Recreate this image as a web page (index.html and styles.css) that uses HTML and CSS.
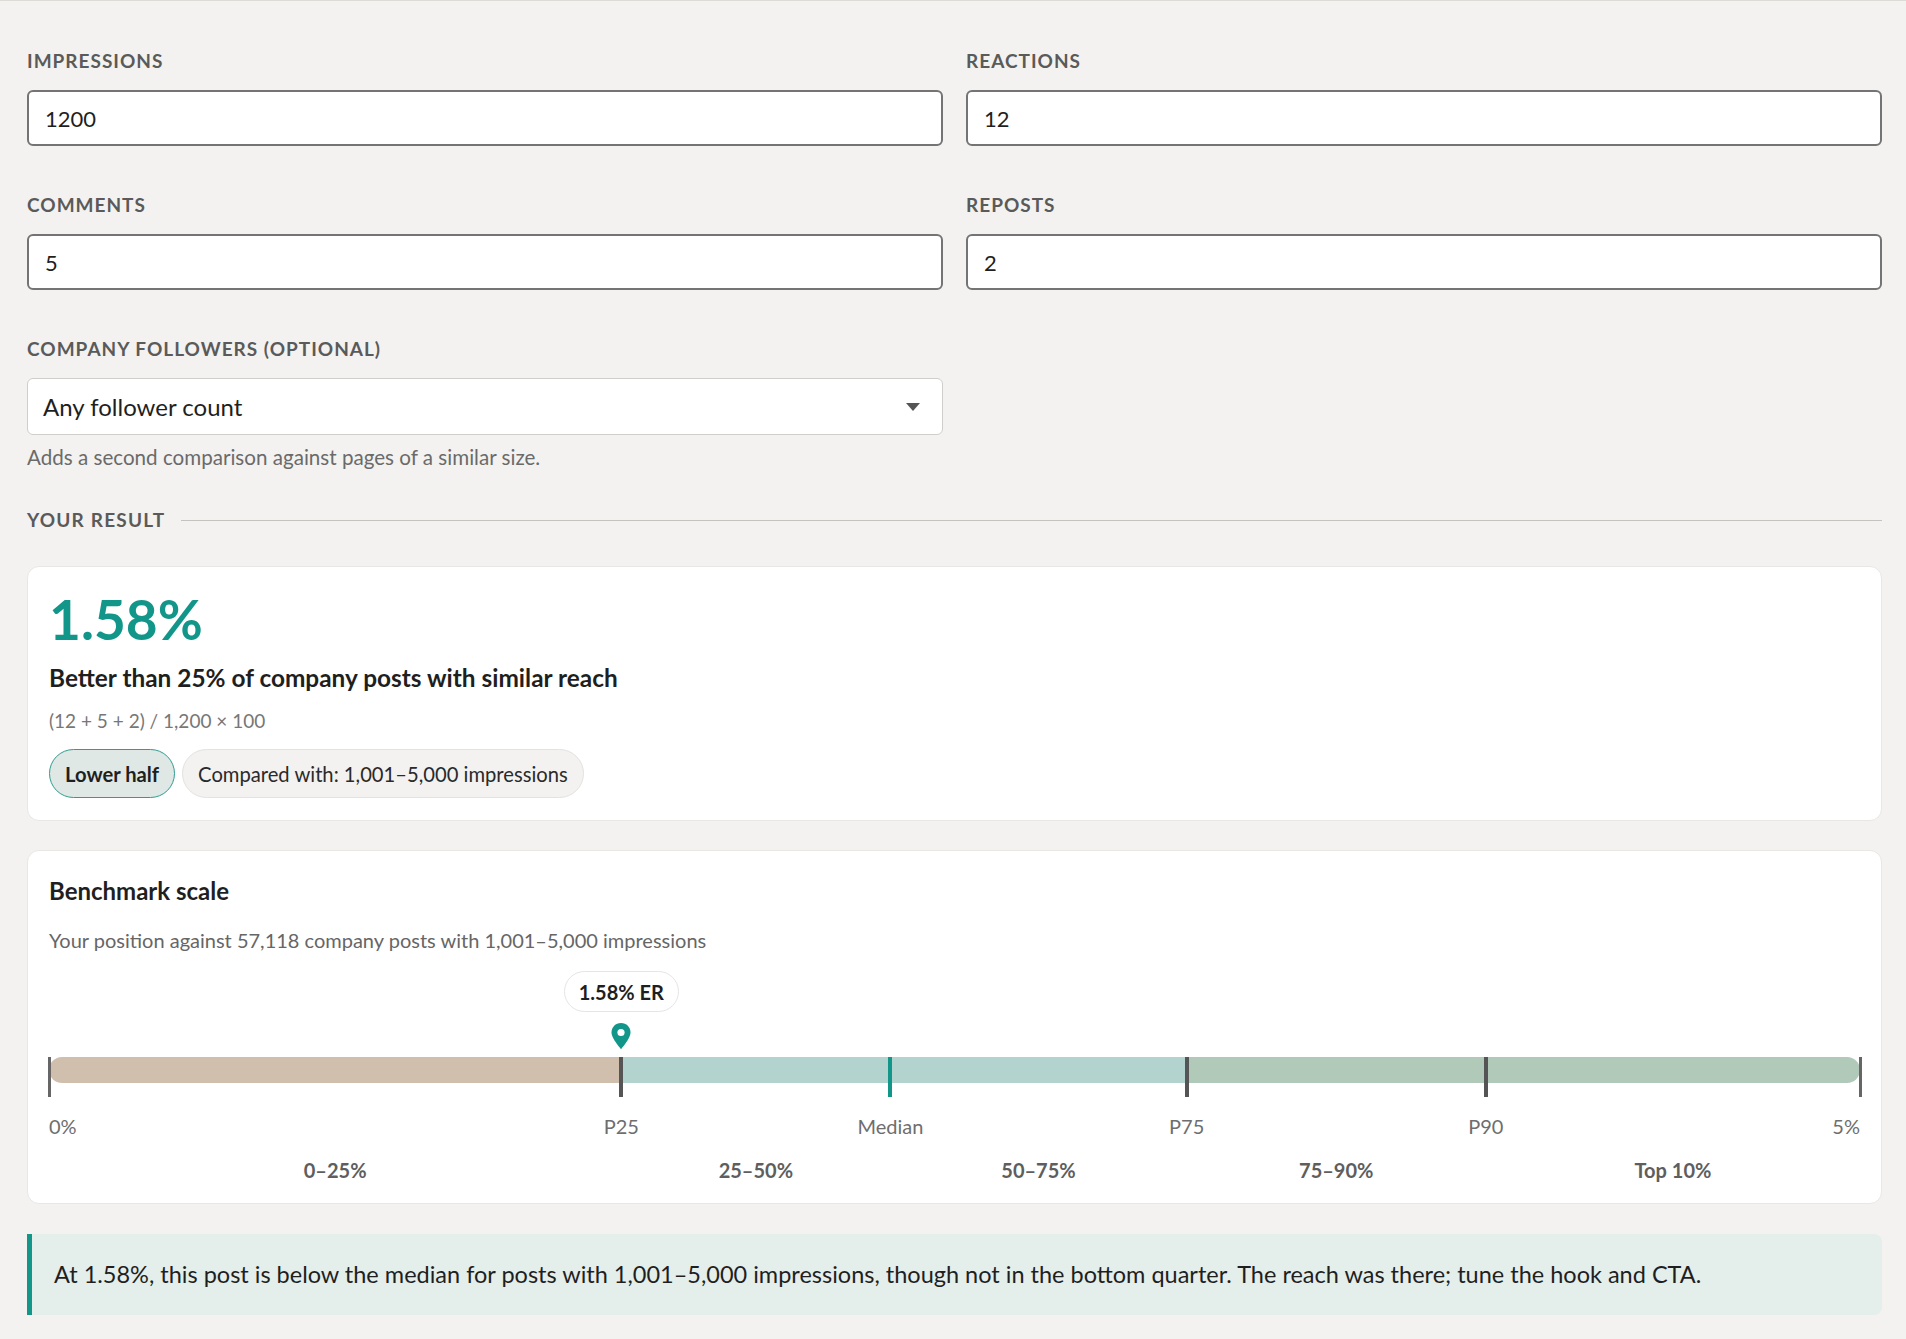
FILE: index.html
```html
<!DOCTYPE html>
<html lang="en">
<head>
<meta charset="utf-8">
<title>Engagement rate calculator</title>
<link rel="stylesheet" href="styles.css">
</head>
<body>
<main class="page">
  <section class="fields">
    <div class="field">
      <label class="field-label" for="imp">Impressions</label>
      <input class="text-input" id="imp" type="text" value="1200">
    </div>
    <div class="field">
      <label class="field-label" for="rea">Reactions</label>
      <input class="text-input" id="rea" type="text" value="12">
    </div>
    <div class="field">
      <label class="field-label" for="com">Comments</label>
      <input class="text-input" id="com" type="text" value="5">
    </div>
    <div class="field">
      <label class="field-label" for="rep">Reposts</label>
      <input class="text-input" id="rep" type="text" value="2">
    </div>
    <div class="field">
      <label class="field-label" for="fol">Company followers (optional)</label>
      <div class="select">
        <span class="select-value">Any follower count</span>
        <svg class="select-arrow" width="16" height="10" viewBox="0 0 16 10"><path d="M1 1h14L8 9z" fill="#555"/></svg>
      </div>
      <p class="help">Adds a second comparison against pages of a similar size.</p>
    </div>
  </section>

  <div class="section-head">
    <span class="section-title">Your result</span>
    <span class="section-rule"></span>
  </div>

  <section class="card result">
    <div class="rate">1.58%</div>
    <div class="rate-desc">Better than 25% of company posts with similar reach</div>
    <div class="formula">(12 + 5 + 2) / 1,200 × 100</div>
    <div class="pills">
      <span class="pill pill-accent">Lower half</span>
      <span class="pill">Compared with: 1,001–5,000 impressions</span>
    </div>
  </section>

  <section class="card bench">
    <h2 class="bench-title">Benchmark scale</h2>
    <p class="bench-sub">Your position against 57,118 company posts with 1,001–5,000 impressions</p>
    <div class="scale">
      <div class="marker" style="left: 31.6%">
        <span class="bubble">1.58% ER</span>
        <svg class="pin" width="20" height="26" viewBox="0 0 20 26"><path d="M10 0C4.5 0 0.5 4.2 0.5 9.4 0.5 15.5 10 26 10 26s9.5-10.5 9.5-16.6C19.5 4.2 15.5 0 10 0z" fill="#13968a"/><circle cx="10" cy="9.5" r="3.6" fill="#fff"/></svg>
      </div>
      <div class="bar">
        <span class="seg seg-low" style="width: 31.6%"></span>
        <span class="seg seg-mid" style="width: 31.2%"></span>
        <span class="seg seg-high" style="width: 37.2%"></span>
        <span class="tick tick-edge" style="left: 0%"></span>
        <span class="tick" style="left: 31.6%"></span>
        <span class="tick tick-median" style="left: 46.46%"></span>
        <span class="tick" style="left: 62.82%"></span>
        <span class="tick" style="left: 79.34%"></span>
        <span class="tick tick-edge" style="left: 100%"></span>
      </div>
      <div class="tick-labels">
        <span class="tl tl-start" style="left: 0%">0%</span>
        <span class="tl" style="left: 31.6%">P25</span>
        <span class="tl" style="left: 46.46%">Median</span>
        <span class="tl" style="left: 62.82%">P75</span>
        <span class="tl" style="left: 79.34%">P90</span>
        <span class="tl tl-end" style="left: 100%">5%</span>
      </div>
      <div class="range-labels">
        <span class="rl" style="left: 15.8%">0–25%</span>
        <span class="rl" style="left: 39.03%">25–50%</span>
        <span class="rl" style="left: 54.64%">50–75%</span>
        <span class="rl" style="left: 71.08%">75–90%</span>
        <span class="rl" style="left: 89.67%">Top 10%</span>
      </div>
    </div>
  </section>

  <aside class="callout">At 1.58%, this post is below the median for posts with 1,001–5,000 impressions, though not in the bottom quarter. The reach was there; tune the hook and CTA.</aside>
</main>
</body>
</html>
```

FILE: styles.css
```css
* { box-sizing: border-box; }

html, body {
  margin: 0;
  padding: 0;
}

body {
  background: #f3f2f0;
  border-top: 1px solid #dcdbd8;
  font-family: Lato, "Noto Sans", "Liberation Sans", sans-serif;
  color: #1f1f1f;
  min-height: 1339px;
}

.page {
  padding: 48px 24px 40px 27px;
}

.fields {
  display: grid;
  grid-template-columns: 1fr 1fr;
  column-gap: 23px;
  row-gap: 47px;
}

.field {
  display: flex;
  flex-direction: column;
}

.field-label {
  font-size: 19px;
  line-height: 24px;
  font-weight: 700;
  letter-spacing: 1px;
  text-transform: uppercase;
  color: #5a5a5a;
  margin-bottom: 17px;
}

.text-input {
  height: 56px;
  border: 2px solid #747474;
  border-radius: 6px;
  background: #fff;
  padding: 0 16px;
  font-family: inherit;
  font-size: 22px;
  color: #1f1f1f;
  outline: none;
}

.select {
  height: 57px;
  border: 1px solid #cfcecb;
  border-radius: 6px;
  background: #fff;
  display: flex;
  align-items: center;
  justify-content: space-between;
  padding: 0 21px 0 15px;
}

.select-value {
  font-size: 24px;
  color: #1f1f1f;
}

.help {
  margin: 9px 0 0;
  font-size: 20.6px;
  line-height: 26px;
  color: #6a6a6a;
}

.section-head {
  display: flex;
  align-items: center;
  gap: 16px;
  margin-top: 38px;
}

.section-title {
  font-size: 19px;
  line-height: 24px;
  font-weight: 700;
  letter-spacing: 1.2px;
  text-transform: uppercase;
  color: #5a5a5a;
}

.section-rule {
  flex: 1;
  height: 1px;
  background: #c4c3c0;
}

.card {
  background: #fff;
  border: 1px solid #e8e7e4;
  border-radius: 12px;
}

.result {
  margin-top: 34px;
  padding: 23px 21px 22px;
}

.rate {
  font-size: 55px;
  line-height: 59px;
  font-weight: 700;
  color: #13968a;
}

.rate-desc {
  margin-top: 14px;
  font-size: 24.4px;
  line-height: 30px;
  font-weight: 700;
  color: #1f1f1f;
}

.formula {
  margin-top: 15px;
  font-size: 19px;
  line-height: 26px;
  color: #777;
}

.pills {
  margin-top: 15px;
  display: flex;
  gap: 7px;
}

.pill {
  height: 49px;
  display: inline-flex;
  align-items: center;
  padding: 0 15px;
  border-radius: 25px;
  background: #f3f2f0;
  border: 1px solid #e3e2df;
  font-size: 20.2px;
  color: #2a2a2a;
}

.pill-accent {
  background: #dfe8e4;
  border: 1.5px solid #2f9d92;
  font-weight: 700;
  color: #1f1f1f;
}

.bench {
  margin-top: 29px;
  padding: 25px 21px 20px;
}

.bench-title {
  margin: 0;
  font-size: 24px;
  line-height: 30px;
  font-weight: 700;
  color: #1f1f1f;
}

.bench-sub {
  margin: 21px 0 0;
  font-size: 20px;
  line-height: 26px;
  color: #666;
}

.scale {
  position: relative;
  margin-top: 18px;
  padding-top: 86px;
}

.marker {
  position: absolute;
  top: 0;
  width: 0;
  display: flex;
  flex-direction: column;
  align-items: center;
}

.bubble {
  height: 41px;
  padding: 0 14px;
  display: inline-flex;
  align-items: center;
  white-space: nowrap;
  background: #fff;
  border: 1px solid #e6e5e2;
  border-radius: 21px;
  font-size: 20px;
  font-weight: 700;
  color: #1f1f1f;
}

.pin {
  margin-top: 11px;
  flex: none;
}

.bar {
  position: relative;
  height: 26px;
  display: flex;
}

.seg {
  height: 26px;
}

.seg-low {
  background: #d0bfad;
  border-radius: 13px 0 0 13px;
}

.seg-mid {
  background: #b3d3cf;
}

.seg-high {
  background: #b0c9b9;
  border-radius: 0 13px 13px 0;
}

.tick {
  position: absolute;
  top: 0;
  width: 4px;
  height: 40px;
  margin-left: -2px;
  background: #555;
}

.tick-edge {
  width: 3px;
  margin-left: -1.5px;
  background: #666;
}

.tick-median {
  background: #13968a;
}

.tick-labels,
.range-labels {
  position: relative;
  height: 26px;
}

.tick-labels {
  margin-top: 30px;
}

.range-labels {
  margin-top: 18px;
}

.tl,
.rl {
  position: absolute;
  top: 0;
  font-size: 20px;
  line-height: 26px;
  white-space: nowrap;
  transform: translateX(-50%);
}

.tl {
  color: #6e6e6e;
}

.tl-start {
  transform: none;
}

.tl-end {
  transform: translateX(-100%);
}

.rl {
  font-weight: 700;
  color: #5e5e5e;
}

.callout {
  margin-top: 30px;
  background: #e4eeeb;
  border-left: 5px solid #13968a;
  border-radius: 0 8px 8px 0;
  padding: 24px 24px 25px 22px;
  font-size: 23.5px;
  line-height: 32px;
  color: #1f1f1f;
}
```
